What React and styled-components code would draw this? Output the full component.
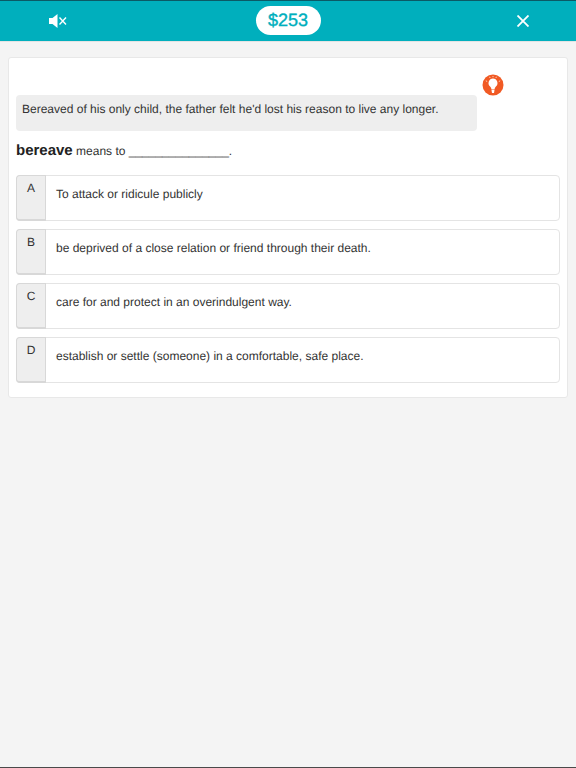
import React from 'react';
import styled, {createGlobalStyle} from "styled-components";

const GlobalStyle = createGlobalStyle`
    html, body {
        margin: 0;
        padding: 0;
        height: 100%;
        background: #f4f4f4;
        font-family: "Liberation Sans", Arial, sans-serif;
        text-rendering: geometricPrecision;
    }
`
const Page = styled.div`
    width: 576px;
    height: 768px;
    display: flex;
    flex-direction: column;
    background: #f4f4f4;
    border-bottom: 1px solid #4a4a4a;
    box-sizing: border-box;
    overflow: hidden;
`
const TopBar = styled.header`
    height: 42px;
    box-sizing: border-box;
    flex-shrink: 0;
    background: #00afbd;
    border-top: 1px solid #0b5a66;
    border-bottom: 1px solid #e4e4e4;
    display: grid;
    grid-template-columns: 1fr auto 1fr;
    align-items: center;
`
const BarSide = styled.div`
    display: flex;
    padding: ${({$right}) => $right ? "0 47px 0 0" : "0 0 0 49px"};
    justify-content: ${({$right}) => $right ? "flex-end" : "flex-start"};
`
const Score = styled.div`
    width: 65px;
    height: 29px;
    margin-top: -1px;
    border-radius: 15px;
    background: #fff;
    color: #00afbd;
    font-size: 18px;
    line-height: 29px;
    text-align: center;
    -webkit-text-stroke: 0.4px #00afbd;
`
const Card = styled.main`
    margin: 15px 8px 0;
    height: 341px;
    box-sizing: border-box;
    background: #fff;
    border: 1px solid #e8e8e8;
    border-radius: 3px;
    padding: 16px 7px 0;
    display: flex;
    flex-direction: column;
`
const HintRow = styled.div`
    height: 22px;
    display: flex;
    justify-content: flex-end;
    padding-right: 56px;
`
const SentenceBox = styled.div`
    width: 461px;
    height: 36px;
    box-sizing: border-box;
    margin-top: -1px;
    padding: 0 6px;
    background: #eeeeee;
    border-radius: 4px;
    color: #333;
    font-size: 12px;
    line-height: 29px;
`
const Prompt = styled.div`
    margin-top: 10px;
    height: 20px;
    line-height: 20px;
    color: #333;
    font-size: 12px;
    strong {
        font-size: 15px;
        color: #222;
    }
`
const Options = styled.div`
    margin-top: 14px;
    display: flex;
    flex-direction: column;
    gap: 8px;
`
const Option = styled.div`
    height: 46px;
    box-sizing: border-box;
    display: flex;
    border: 1px solid #e4e4e4;
    border-radius: 4px;
    background: #fff;
`
const Letter = styled.div`
    width: 30px;
    flex-shrink: 0;
    margin: -1px 0 -1px -1px;
    box-sizing: border-box;
    background: #eeeeee;
    border: 1px solid #d8d8d8;
    border-bottom-width: 2px;
    border-radius: 4px 0 0 4px;
    color: #333;
    font-size: 12px;
    line-height: 24px;
    text-align: center;
`
const Answer = styled.div`
    padding-left: 10px;
    color: #333;
    font-size: 12px;
    line-height: 37px;
`

const MuteIcon = () => (
    <svg width="18" height="14" viewBox="0 0 18 14">
        <path d="M0 4h3.500L8.500 0v14l-5-4H0z" fill="#fff"/>
        <path d="M10.500 3.500l6.500 7M17 3.500l-6.500 7" stroke="#fff" strokeWidth="1.400"/>
    </svg>
)

const CloseIcon = () => (
    <svg width="12" height="12" viewBox="0 0 12 12">
        <path d="M.5.5l11 11M11.500.5l-11 11" stroke="#fff" strokeWidth="1.800"/>
    </svg>
)

const HintIcon = () => (
    <svg width="22" height="22" viewBox="0 0 22 22">
        <circle cx="11" cy="11" r="10.500" fill="#f15a24"/>
        <path d="M11 4.500a4.500 4.500 0 0 0-2.900 7.900c.8.800 1.200 1.600 1.300 2.600h3.200c.1-1 .5-1.800 1.300-2.600a4.500 4.500 0 0 0-2.900-7.900z" fill="#fff"/>
        <path d="M9.400 15.500h3.200l-.6 3.500h-2z" fill="#fff"/>
        <path d="M3.800 6.800l1.400.7M18.200 6.800l-1.400.7M7.600 2.800l.5 1.200M14.400 2.800l-.5 1.200M11 2v1.200" stroke="#fbd0bd" strokeWidth="1"/>
    </svg>
)

const answers = [
    {letter: "A", text: "To attack or ridicule publicly"},
    {letter: "B", text: "be deprived of a close relation or friend through their death."},
    {letter: "C", text: "care for and protect in an overindulgent way."},
    {letter: "D", text: "establish or settle (someone) in a comfortable, safe place."},
]

const App = () => {
    return (
        <Page>
            <GlobalStyle/>
            <TopBar>
                <BarSide><MuteIcon/></BarSide>
                <Score>$253</Score>
                <BarSide $right><CloseIcon/></BarSide>
            </TopBar>
            <Card>
                <HintRow><HintIcon/></HintRow>
                <SentenceBox>Bereaved of his only child, the father felt he'd lost his reason to live any longer.</SentenceBox>
                <Prompt><strong>bereave</strong> means to _______________.</Prompt>
                <Options>
                    {answers.map((item) => (
                        <Option key={item.letter}>
                            <Letter>{item.letter}</Letter>
                            <Answer>{item.text}</Answer>
                        </Option>
                    ))}
                </Options>
            </Card>
        </Page>
    );
};

export default App;
